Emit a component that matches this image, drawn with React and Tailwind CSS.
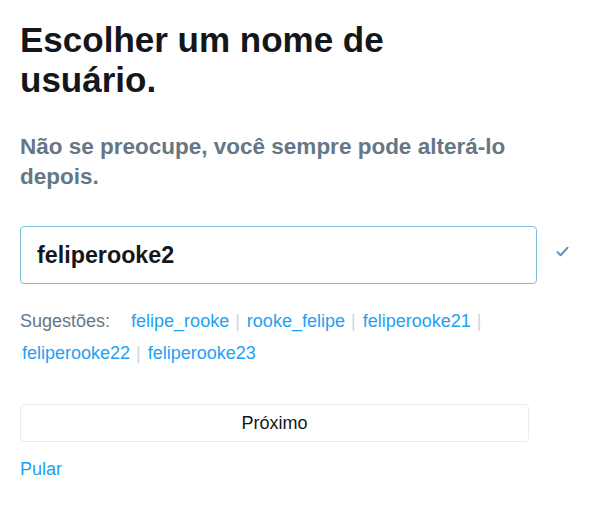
import { useState } from 'react';

const suggestions = ['felipe_rooke', 'rooke_felipe', 'feliperooke21', 'feliperooke22', 'feliperooke23'];

export default function App() {
  const [username, setUsername] = useState('feliperooke2');

  return (
    <div className="min-h-screen bg-white px-5 pt-5 font-['Liberation_Sans',Arial,sans-serif]">
      {/* Title */}
      <h1 className="w-[420px] text-[35px] font-bold leading-[40px] text-[#14171a]">
        Escolher um nome de usuário.
      </h1>
      <p className="mt-[32px] text-[22.5px] font-bold leading-[30px] text-[#657786]">
        Não se preocupe, você sempre pode alterá-lo depois.
      </p>

      {/* Username input */}
      <div className="mt-[34px] flex items-center">
        <input
          type="text"
          autoFocus
          value={username}
          onChange={(e) => setUsername(e.target.value)}
          className="h-[58px] w-[517px] rounded-[4px] border border-[#7cbfdc] px-4 text-[23.3px] font-bold text-[#14171a] caret-black outline-none"
        />
        <svg viewBox="0 0 24 24" className="ml-[18px] -mt-[8px] h-[15px] w-[15px]" fill="none" stroke="#5a93c8" strokeWidth="3.2" strokeLinecap="round" strokeLinejoin="round">
          <path d="M4 13l5 5L20 6" />
        </svg>
      </div>

      {/* Suggestions */}
      <div className="mt-[21px] w-[509px] text-[18px] leading-[32px] text-[#657786]">
        <span className="mr-[14px]">Sugestões:</span>{' '}
        {suggestions.map((s, i) => (
          <span key={s}>
            <span className="whitespace-nowrap">
              <a href="#" className="px-[2px] text-[#1da1f2]">{s}</a>
              {i < suggestions.length - 1 && <span className="ml-[4px] text-[#ccd6dd]">|</span>}
            </span>{' '}
          </span>
        ))}
      </div>

      {/* Actions */}
      <button className="mt-[35px] block h-[38px] w-[509px] rounded-[4px] border border-[#e6ecf0] bg-white text-[18px] text-[#14171a]">
        Próximo
      </button>
      <div className="mt-[15px] leading-[24px]">
        <a href="#" className="text-[18px] text-[#1da1f2]">Pular</a>
      </div>
    </div>
  );
}
